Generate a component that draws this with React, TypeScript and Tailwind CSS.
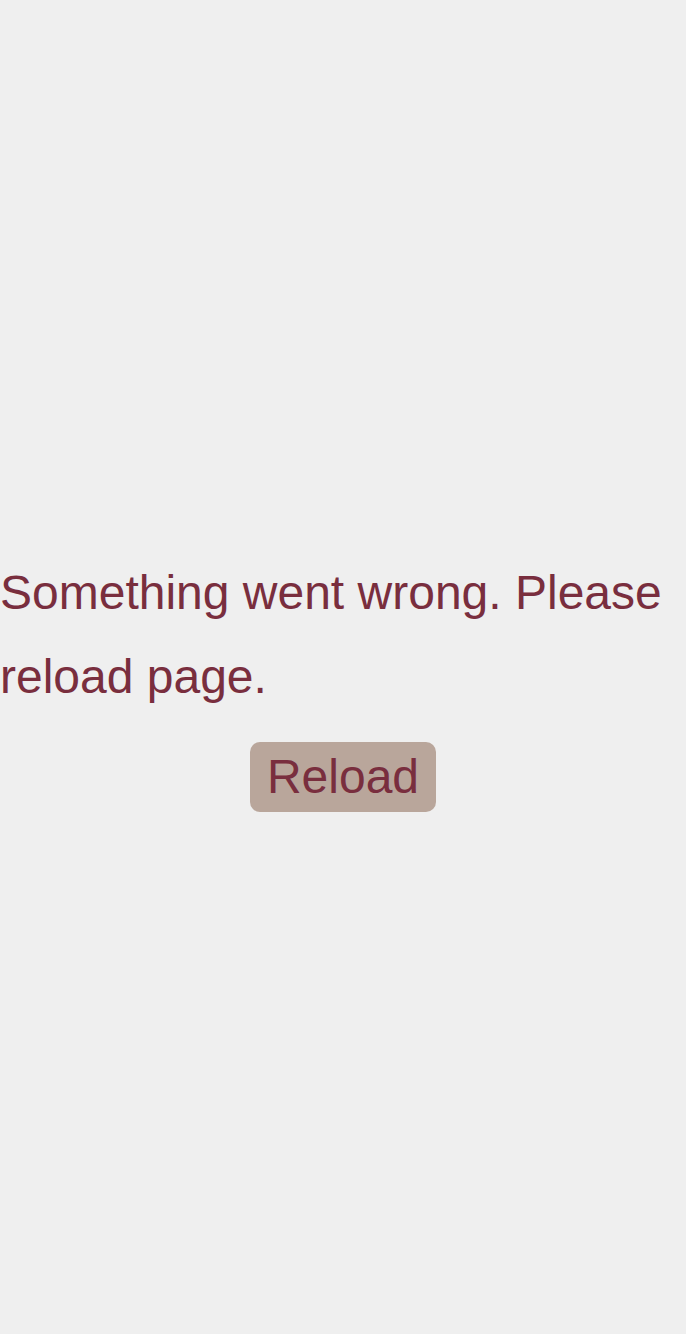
import React from "react";

export default function App() {
    return (
        <div className="min-h-screen bg-[#efefef] flex flex-col justify-center pt-[29px] font-['Liberation_Sans',Arial,sans-serif] text-[#792e3e]">
            <p className="text-[48px] leading-[84px] text-left">Something went wrong. Please reload page.</p>
            <div className="flex justify-center mt-[23px]">
                <button className="bg-[#b9a69b] text-[#792e3e] text-[48px] leading-[55px] px-[17px] pt-[6.5px] pb-[8.5px] rounded-[10px]">
                    Reload
                </button>
            </div>
        </div>
    );
}
